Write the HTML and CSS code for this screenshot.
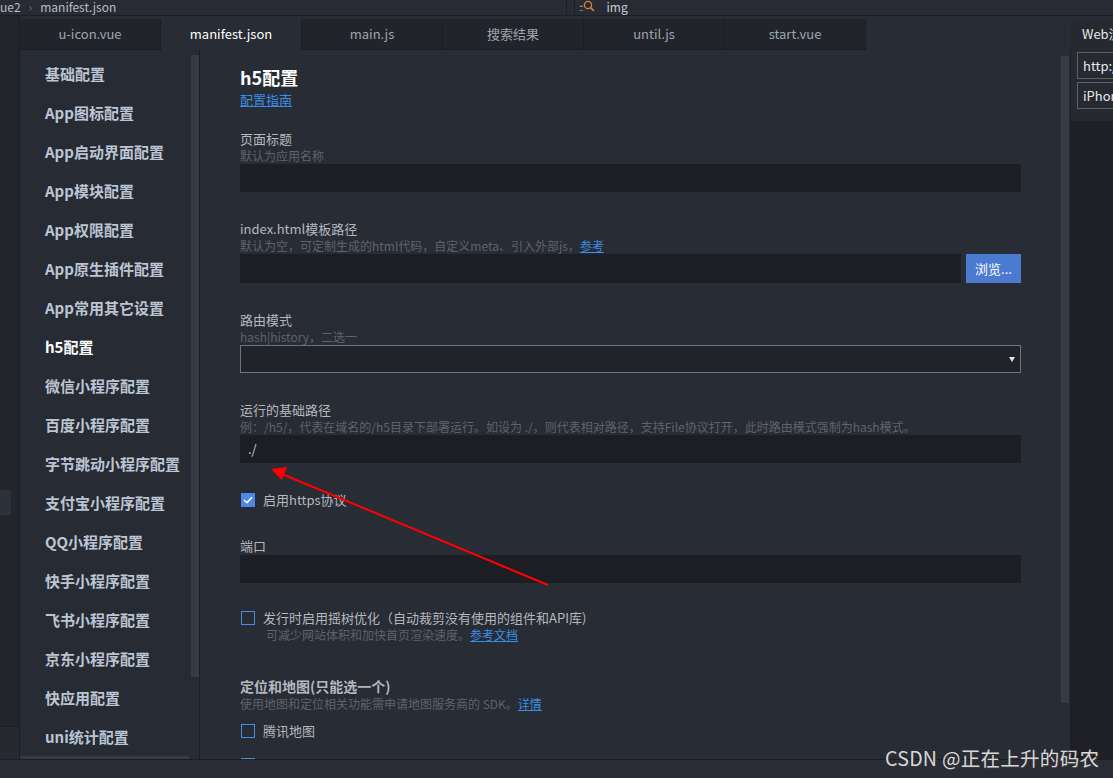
FILE: index.html
```html
<!DOCTYPE html>
<html lang="zh-CN">
<head>
    <meta charset="UTF-8">
    <title>manifest.json</title>
    <link rel="stylesheet" href="styles.css">
</head>
<body>

    <header class="topbar">
        <div class="crumbs">
            <span>ue2</span>
            <span class="crumb-sep">&#8250;</span>
            <span>manifest.json</span>
        </div>
        <div class="search">
            <span class="search-dots">::</span>
            <svg class="search-icon" width="12" height="12" viewBox="0 0 12 12">
                <circle cx="5" cy="5" r="3.6" fill="none" stroke="#d28445" stroke-width="1.3"/>
                <path d="M7.6 7.6 L11 11" stroke="#d28445" stroke-width="1.5"/>
            </svg>
            <span class="search-text">img</span>
        </div>
    </header>

    <div class="workspace">
        <div class="side-strip">
            <div class="strip-mark"></div>
            <div class="strip-foot"></div>
        </div>

        <div class="editor">
            <div class="tabs">
                <div class="tab">u-icon.vue</div>
                <div class="tab active">manifest.json</div>
                <div class="tab">main.js</div>
                <div class="tab">搜索结果</div>
                <div class="tab">until.js</div>
                <div class="tab">start.vue</div>
                <div class="tab-rest"></div>
            </div>

            <div class="editor-body">
                <nav class="config-nav">
                    <div class="nav-list">
                        <a>基础配置</a>
                        <a>App图标配置</a>
                        <a>App启动界面配置</a>
                        <a>App模块配置</a>
                        <a>App权限配置</a>
                        <a>App原生插件配置</a>
                        <a>App常用其它设置</a>
                        <a class="current">h5配置</a>
                        <a>微信小程序配置</a>
                        <a>百度小程序配置</a>
                        <a>字节跳动小程序配置</a>
                        <a>支付宝小程序配置</a>
                        <a>QQ小程序配置</a>
                        <a>快手小程序配置</a>
                        <a>飞书小程序配置</a>
                        <a>京东小程序配置</a>
                        <a>快应用配置</a>
                        <a>uni统计配置</a>
                        <div class="hscroll"></div>
                    </div>
                    <div class="nav-scroll"><div class="nav-thumb"></div></div>
                </nav>

                <section class="config">
                    <h2>h5配置</h2>
                    <a class="link guide">配置指南</a>

                    <div class="field first">
                        <div class="label">页面标题</div>
                        <div class="hint">默认为应用名称</div>
                        <div class="input"></div>
                    </div>

                    <div class="field">
                        <div class="label">index.html模板路径</div>
                        <div class="hint">默认为空，可定制生成的html代码，自定义meta、引入外部js，<a class="link">参考</a></div>
                        <div class="input-row">
                            <div class="input"></div>
                            <button class="browse">浏览...</button>
                        </div>
                    </div>

                    <div class="field">
                        <div class="label">路由模式</div>
                        <div class="hint">hash|history，二选一</div>
                        <div class="select"><span class="caret"></span></div>
                    </div>

                    <div class="field">
                        <div class="label">运行的基础路径</div>
                        <div class="hint">例：/h5/，代表在域名的/h5目录下部署运行。如设为 ./，则代表相对路径，支持File协议打开，此时路由模式强制为hash模式。</div>
                        <div class="input">./</div>
                    </div>

                    <label class="check field">
                        <span class="box checked">
                            <svg width="10" height="8" viewBox="0 0 10 8"><path d="M1 4 L4 6.6 L9 1.2" fill="none" stroke="#fff" stroke-width="1.6"/></svg>
                        </span>
                        启用https协议
                    </label>

                    <div class="field">
                        <div class="label">端口</div>
                        <div class="input"></div>
                    </div>

                    <div class="field tight">
                        <label class="check">
                            <span class="box"></span>
                            发行时启用摇树优化（自动裁剪没有使用的组件和API库)
                        </label>
                        <div class="hint indent">可减少网站体积和加快首页渲染速度。<a class="link">参考文档</a></div>
                    </div>

                    <div class="group">
                        <div class="group-title">定位和地图(只能选一个)</div>
                        <div class="hint">使用地图和定位相关功能需申请地图服务商的 SDK。<a class="link">详情</a></div>
                        <label class="check map">
                            <span class="box"></span>
                            腾讯地图
                        </label>
                        <label class="check map next">
                            <span class="box"></span>
                            高德地图
                        </label>
                    </div>
                </section>

                <div class="vscroll"><div class="vthumb"></div></div>
            </div>
        </div>

        <aside class="preview">
            <div class="preview-head">
                <div class="preview-title">Web浏览器</div>
                <div class="preview-box">http://localhost</div>
                <div class="preview-box">iPhone 6</div>
            </div>
        </aside>
    </div>

    <footer class="statusbar"></footer>

    <!-- annotation on top of the screenshot -->
    <svg class="arrow" width="1113" height="778" viewBox="0 0 1113 778">
        <line x1="548" y1="585" x2="282" y2="474" stroke="#ff0000" stroke-width="2"/>
        <polygon points="271,469 287,467 282,480" fill="#ff0000"/>
    </svg>
    <div class="watermark">CSDN @正在上升的码农</div>

</body>
</html>
```

FILE: styles.css
```css
body {
    margin: 0;
    width: 1113px;
    height: 778px;
    overflow: hidden;
    background-color: #282c34;
    font-family: "Noto Sans CJK SC", "Noto Sans", sans-serif;
    color: #b4b8bf;
    position: relative;
}

.topbar {
    height: 15px;
    display: flex;
    border-bottom: 1px solid #1c1e23;
    background-color: #282b33;
    font-size: 12px;
    line-height: 13px;
    color: #b8bdc5;
}

.crumbs {
    width: 566px;
    display: flex;
    gap: 8px;
    border-right: 1px solid #1c1e23;
}

.crumb-sep {
    color: #6c717a;
}

.search {
    margin-left: 7px;
    padding-left: 4px;
    display: flex;
    align-items: flex-start;
    border-left: 1px solid #1c1e23;
}

.search-dots {
    color: #9da2aa;
    font-size: 10px;
    letter-spacing: -1px;
}

.search-icon {
    margin-right: 12px;
}

.search-text {
    color: #c8ccd3;
}

.workspace {
    display: flex;
    height: 743px;
}

.side-strip {
    width: 19px;
    border-right: 1px solid #1b1d22;
    background-color: #22252c;
    display: flex;
    flex-direction: column;
}

.strip-mark {
    margin-top: 474px;
    width: 11px;
    height: 25px;
    background-color: #2d3139;
}

.strip-foot {
    margin-top: auto;
    height: 32px;
    border-top: 1px solid #1b1d22;
    background-color: #262930;
}

.editor {
    width: 1051px;
    display: flex;
    flex-direction: column;
}

.tabs {
    margin-top: 3px;
    height: 31px;
    display: flex;
    background-color: #282c34;
}

.tab {
    width: 140px;
    border-right: 1px solid #1b1d22;
    border-bottom: 1px solid #1b1d22;
    background-color: #21242b;
    color: #9ea4ad;
    font-size: 13px;
    text-align: center;
    line-height: 30px;
}

.tab.active {
    background-color: #282c34;
    color: #ffffff;
    border-bottom-color: #282c34;
}

.tab-rest {
    flex: 1;
    background-color: #282c34;
}

.editor-body {
    flex: 1;
    display: flex;
    overflow: hidden;
}

.config-nav {
    width: 179px;
    display: flex;
    border-right: 1px solid #1d1f25;
    background-color: #272b33;
}

.nav-list {
    width: 171px;
    padding-top: 4px;
    display: flex;
    flex-direction: column;
}

.nav-list a {
    padding-left: 25px;
    line-height: 39px;
    font-size: 15px;
    font-weight: bold;
    color: #bcc5d4;
    white-space: nowrap;
}

.nav-list a.current {
    color: #ffffff;
}

.hscroll {
    margin-top: auto;
    height: 8px;
    width: 169px;
    background-color: #363b46;
}

.nav-scroll {
    width: 8px;
    padding-top: 5px;
}

.nav-thumb {
    height: 622px;
    background-color: #363b46;
}

.config {
    width: 782px;
    padding: 16px 40px 0 40px;
    font-size: 13px;
}

.config h2 {
    margin: 0;
    font-size: 18px;
    line-height: 23px;
    color: #ffffff;
}

.link {
    color: #3a8ee6;
    text-decoration: underline;
}

.guide {
    display: block;
    margin-top: 2px;
    line-height: 18px;
}

.field {
    display: block;
    margin-top: 28px;
}

.field.first {
    margin-top: 21px;
}

.field.tight {
    margin-top: 26px;
}

.label {
    line-height: 18px;
    color: #b4b8bf;
}

.hint {
    font-size: 12px;
    line-height: 16px;
    color: #5e636c;
    white-space: nowrap;
}

.hint.indent {
    padding-left: 26px;
}

.input {
    height: 28px;
    background-color: #1d1e23;
    color: #c9cdd3;
    line-height: 28px;
    padding-left: 8px;
    box-sizing: border-box;
}

.input-row {
    display: flex;
    gap: 5px;
}

.input-row .input {
    flex: 1;
    height: 29px;
}

.browse {
    width: 55px;
    height: 29px;
    border: none;
    padding: 0;
    background-color: #4b7bd1;
    color: #ffffff;
    font-family: inherit;
    font-size: 13px;
}

.select {
    height: 28px;
    border: 1px solid #6d7482;
    background-color: #21232b;
    box-sizing: border-box;
    display: flex;
    justify-content: flex-end;
    align-items: center;
    padding-right: 5px;
}

.caret {
    width: 0;
    height: 0;
    border-left: 3.5px solid transparent;
    border-right: 3.5px solid transparent;
    border-top: 5px solid #e4e6ea;
}

.check {
    display: flex;
    align-items: center;
    gap: 8px;
    line-height: 18px;
    color: #b4b8bf;
}

.box {
    width: 14px;
    height: 14px;
    box-sizing: border-box;
    border: 1.5px solid #4b88e8;
    display: flex;
    align-items: center;
    justify-content: center;
    margin-left: 1px;
}

.box.checked {
    background-color: #4b88e8;
}

.group {
    margin-top: 33px;
}

.group-title {
    font-size: 14px;
    font-weight: bold;
    line-height: 20px;
    color: #b4b8bf;
}

.check.map {
    margin-top: 10px;
}

.check.map.next {
    margin-top: 16px;
}

.vscroll {
    width: 9px;
    padding-top: 6px;
    border-right: 1px solid #1d1f25;
}

.vthumb {
    width: 8px;
    height: 647px;
    background-color: #363b47;
}

.preview {
    width: 42px;
    margin-top: 3px;
    background-color: #1e2025;
    overflow: hidden;
}

.preview-head {
    height: 102px;
    background-color: #262930;
    padding-left: 6px;
    white-space: nowrap;
    font-size: 13px;
}

.preview-title {
    line-height: 30px;
    padding-left: 5px;
    color: #e6e8eb;
}

.preview-box {
    margin-top: 3px;
    width: 80px;
    height: 27px;
    line-height: 25px;
    box-sizing: border-box;
    border: 1px solid #5a606b;
    padding-left: 5px;
    color: #e6e8eb;
}

.statusbar {
    height: 18px;
    border-top: 1px solid #1b1d22;
    background-color: #2a2d35;
}

.arrow {
    position: absolute;
    left: 0;
    top: 0;
    pointer-events: none;
}

.watermark {
    position: absolute;
    left: 885px;
    top: 745px;
    font-size: 19.5px;
    line-height: 26px;
    letter-spacing: 0.3px;
    color: #d8d8d8;
    text-shadow: 1px 1px 1px #3a3a3a;
    white-space: nowrap;
}
```
